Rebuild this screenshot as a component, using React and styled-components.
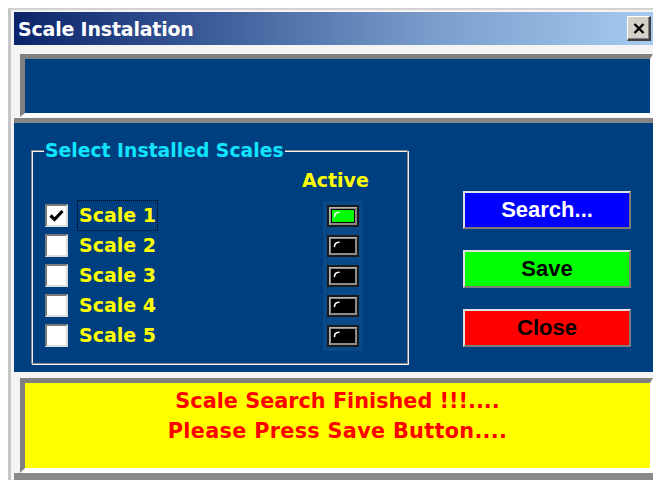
import React from "react";
import styled, { createGlobalStyle } from "styled-components";

const GlobalStyle = createGlobalStyle`
  html, body {
    margin: 0;
    padding: 0;
    background: #ffffff;
    overflow: hidden;
  }
  *, *::before, *::after { box-sizing: border-box; }
`;

const NAVY = "#003f7f";
const UI_FONT = `"DejaVu Sans", "Noto Sans", sans-serif`;

const Window = styled.div`
  width: 645px;
  margin: 8px 0 0 8px;
  border-top: 2px solid #d2d2d2;
  border-left: 3px solid #c6c6c6;
  padding: 2px 0 0 3px;
  background: #f4f4f4;
  font-family: ${UI_FONT};
`;

const TitleBar = styled.div`
  height: 33px;
  display: flex;
  align-items: center;
  justify-content: space-between;
  padding-left: 4px;
  background: linear-gradient(to right, #0a246a 0%, #3a5a98 30%, #7a9ccb 65%, #a6caf0 100%);
`;

const Title = styled.span`
  color: #ffffff;
  font-weight: bold;
  font-size: 19px;
  letter-spacing: -0.2px;
`;

const CloseBox = styled.button`
  width: 24px;
  height: 25px;
  margin-right: 2px;
  padding: 0;
  display: flex;
  align-items: center;
  justify-content: center;
  background: #d4d0c8;
  border-style: solid;
  border-width: 1px 2px 2px 1px;
  border-color: #ffffff #404040 #404040 #ffffff;
  box-shadow: inset -1px -1px 0 #808080;
`;

const Content = styled.div`
  display: flex;
  flex-direction: column;
  border-bottom: 7px solid #8a8a8a;
`;

const Sunken = styled.div`
  margin-left: 6px;
  border-style: solid;
  border-width: 5px 3px ${(p) => p.$bottom}px 5px;
  border-color: #808080 #ffffff #ffffff #808080;
  background: ${(p) => p.$fill};
  height: ${(p) => p.$height}px;
`;

const TopPanel = styled(Sunken)`
  margin-top: 9px;
`;

const MainPanel = styled.div`
  margin-top: 1px;
  height: 254px;
  border-top: 5px solid #868686;
  background: ${NAVY};
  display: flex;
  align-items: flex-start;
`;

const GroupFrame = styled.div`
  width: 377px;
  height: 214px;
  margin: 27px 0 0 17px;
  border: 1px solid #8a8a8a;
  box-shadow: 1px 1px 0 #f2f2f2, inset 1px 1px 0 #f2f2f2;
  display: flex;
  flex-direction: column;
  align-items: flex-start;
`;

const Caption = styled.span`
  margin: -11px 0 0 12px;
  padding: 0 1px;
  line-height: 22px;
  font-size: 18.8px;
  font-weight: bold;
  color: #10e4ff;
  background: ${NAVY};
  white-space: nowrap;
`;

const ColumnHead = styled.span`
  margin: 7px 0 0 270px;
  line-height: 22px;
  font-size: 19px;
  font-weight: bold;
  color: #ffff00;
`;

const Rows = styled.div`
  margin-top: 9px;
  padding-left: 13px;
  display: flex;
  flex-direction: column;
`;

const Row = styled.div`
  height: 30px;
  display: grid;
  grid-template-columns: 24px 254px 40px;
  align-items: center;
`;

const Check = styled.span`
  width: 23px;
  height: 23px;
  display: flex;
  align-items: center;
  justify-content: center;
  background: #ffffff;
  border-style: solid;
  border-width: 2px;
  border-color: #7a7a7a #dcdcdc #dcdcdc #7a7a7a;
`;

const Label = styled.span`
  justify-self: start;
  margin-left: 8px;
  padding: 0 1px;
  line-height: 29px;
  font-size: 19px;
  font-weight: bold;
  color: #ffff00;
  border: 1px dotted ${(p) => (p.$focused ? "#000000" : "transparent")};
`;

const LedCell = styled.div`
  height: 30px;
  display: flex;
  align-items: center;
  justify-content: center;
  background: #0a4987;
`;

const Led = styled.div`
  width: 32px;
  height: 22px;
  border: 2px solid #1a1a1a;
  background: #8c8c8c;
  padding: 2px;
  box-shadow: inset 1px 1px 0 #b4b4b4;
`;

const LedLamp = styled.div`
  width: 100%;
  height: 100%;
  border: 1px solid #000000;
  background: ${(p) => (p.$on ? "#00ff00" : "#000000")};
  display: flex;
`;

const ButtonColumn = styled.div`
  margin: 68px 0 0 55px;
  display: flex;
  flex-direction: column;
  gap: 21px;
`;

const ActionButton = styled.button`
  width: 168px;
  height: 38px;
  padding: 0;
  background: ${(p) => p.$bg};
  color: ${(p) => p.$fg};
  font-family: "Liberation Sans", Arial, sans-serif;
  font-weight: bold;
  font-size: 22px;
  border-style: solid;
  border-width: 2px;
  border-color: #e2e2e2 #7c7c7c #7c7c7c #e2e2e2;
`;

const StatusPanel = styled(Sunken)`
  margin-top: 6px;
  padding-top: 3px;
  display: flex;
  flex-direction: column;
  align-items: center;
`;

const StatusLine = styled.span`
  line-height: 30px;
  font-size: 20.8px;
  font-weight: bold;
  color: #ff0000;
  white-space: nowrap;
  letter-spacing: ${(p) => p.$spacing || 0}px;
`;

const scales = [
  { name: "Scale 1", checked: true, active: true },
  { name: "Scale 2", checked: false, active: false },
  { name: "Scale 3", checked: false, active: false },
  { name: "Scale 4", checked: false, active: false },
  { name: "Scale 5", checked: false, active: false },
];

function CheckMark() {
  return (
    <svg width="15" height="13" viewBox="0 0 15 13">
      <path d="M1.5 6.5 L5.5 10.5 L13.5 2" fill="none" stroke="#000" strokeWidth="3.2" />
    </svg>
  );
}

function Glare() {
  return (
    <svg width="10" height="8" viewBox="0 0 10 8">
      <path d="M2.5 6.5 Q2.5 2.5 7 2.3" fill="none" stroke="#ffffff" strokeWidth="1.6" strokeLinecap="round" />
    </svg>
  );
}

export default function App() {
  return (
    <>
      <GlobalStyle />
      <Window>
        <TitleBar>
          <Title>Scale Instalation</Title>
          <CloseBox aria-label="Close">
            <svg width="12" height="11" viewBox="0 0 12 11">
              <path d="M1.5 1 L10.5 10 M10.5 1 L1.5 10" stroke="#000" strokeWidth="2.4" />
            </svg>
          </CloseBox>
        </TitleBar>
        <Content>
          <TopPanel $fill={NAVY} $height={63} $bottom={4} />
          <MainPanel>
            <GroupFrame>
              <Caption>Select Installed Scales</Caption>
              <ColumnHead>Active</ColumnHead>
              <Rows>
                {scales.map((s, i) => (
                  <Row key={s.name}>
                    <Check>{s.checked && <CheckMark />}</Check>
                    <Label $focused={i === 0}>{s.name}</Label>
                    <LedCell>
                      <Led>
                        <LedLamp $on={s.active}>
                          <Glare />
                        </LedLamp>
                      </Led>
                    </LedCell>
                  </Row>
                ))}
              </Rows>
            </GroupFrame>
            <ButtonColumn>
              <ActionButton $bg="#0000ff" $fg="#ffffff">Search...</ActionButton>
              <ActionButton $bg="#00ff00" $fg="#000000">Save</ActionButton>
              <ActionButton $bg="#ff0000" $fg="#000000">Close</ActionButton>
            </ButtonColumn>
          </MainPanel>
          <StatusPanel $fill="#ffff00" $height={95} $bottom={5}>
            <StatusLine>Scale Search Finished !!!....</StatusLine>
            <StatusLine $spacing={0.3}>Please Press Save Button....</StatusLine>
          </StatusPanel>
        </Content>
      </Window>
    </>
  );
}
